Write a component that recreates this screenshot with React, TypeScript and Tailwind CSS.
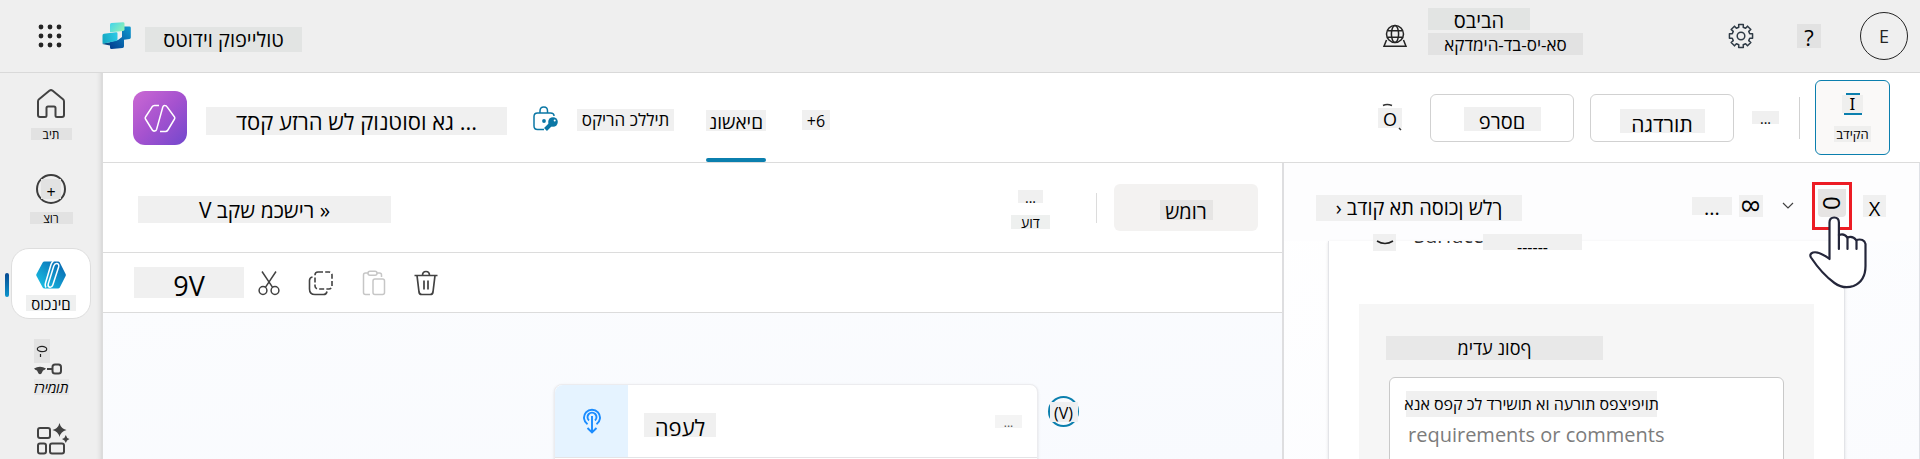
import React from "react";

type PatchProps = { text: string; className?: string };

function Patch({ text, className = "" }: PatchProps) {
  return (
    <span className={`flex shrink-0 items-end justify-center whitespace-nowrap text-black ${className}`}>
      <bdo dir="ltr" className="block">{text}</bdo>
    </span>
  );
}

function WaffleIcon() {
  return (
    <svg width="24" height="24" viewBox="0 0 24 24" fill="#242424" aria-hidden="true">
      {[3, 12, 21].map((y) => [3, 12, 21].map((x) => <circle key={`${x}-${y}`} cx={x} cy={y} r="2.4" />))}
    </svg>
  );
}

function ProductLogo() {
  return (
    <svg width="30" height="28" viewBox="0 0 30 28" aria-hidden="true">
      <defs>
        <linearGradient id="logoTop" x1="0" y1="0" x2="1" y2="0.6">
          <stop offset="0" stopColor="#3fd3ee" />
          <stop offset="1" stopColor="#8cf0b8" />
        </linearGradient>
        <linearGradient id="logoLeft" x1="0" y1="0.5" x2="1" y2="0.3">
          <stop offset="0" stopColor="#16a9c4" />
          <stop offset="1" stopColor="#2cc9e6" />
        </linearGradient>
        <linearGradient id="logoDark" x1="0" y1="1" x2="1" y2="0">
          <stop offset="0" stopColor="#023c8f" />
          <stop offset="1" stopColor="#0f9bd0" />
        </linearGradient>
      </defs>
      <path d="M20 4.500h7.500q1.300 0 1.300 1.300v9.700q0 1.300-1.300 1.500l-5.500.800v6.400q0 1.600-1.500 1.800l-11 1q-1.500 0-1.500-1.500v-5.500l8-2 4-3z" fill="url(#logoDark)" />
      <path d="M2 21.200q-1.500 0-1.700.800l7.700 1.600v-3.400z" fill="#0a4a86" />
      <path d="M2 11.800 14 10.200q1.500-.200 1.500 1.200v6q0 1.300-1.500 1.600L1.800 21.600Q.5 21.800.5 20.500v-7q0-1.500 1.500-1.700z" fill="url(#logoLeft)" />
      <path d="M9.500.9 21 .2q1.500 0 1.500 1.300v6q0 1.300-1.500 1.600L8 10.300V2.400Q8 1 9.500.9z" fill="url(#logoTop)" />
    </svg>
  );
}

function GlobeIcon() {
  return (
    <svg width="26" height="24" viewBox="0 0 26 24" fill="none" stroke="#242424" strokeWidth="1.500" aria-hidden="true">
      <circle cx="13" cy="10" r="8.500" />
      <ellipse cx="13" cy="10" rx="3.600" ry="8.500" />
      <path d="M5.500 6.800h15M5.500 13.200h15M4.500 16 2 22.200h22L21.500 16" />
    </svg>
  );
}

function GearIcon() {
  const teeth: string[] = [];
  for (let i = 0; i < 8; i++) {
    const a = (i * 45 * Math.PI) / 180;
    const p = (r: number, d: number) => `${(13 + r * Math.sin(a + d)).toFixed(2)} ${(13 - r * Math.cos(a + d)).toFixed(2)}`;
    teeth.push(`${p(9, -0.25)} L${p(11.8, -0.2)} L${p(11.8, 0.2)} L${p(9, 0.25)}`);
  }
  return (
    <svg width="26" height="26" viewBox="0 0 26 26" fill="none" stroke="#2f3b46" strokeWidth="1.500" strokeLinejoin="round" aria-hidden="true">
      <path d={`M${teeth.join(" L")} Z`} />
      <circle cx="13" cy="13" r="3.800" />
    </svg>
  );
}

function HomeIcon() {
  return (
    <svg width="30" height="30" viewBox="0 0 30 30" fill="none" stroke="#424242" strokeWidth="2" strokeLinejoin="round" aria-hidden="true">
      <path d="M2 12.500q0-1.400 1-2.200L13.600 1.600q1.400-1 2.800 0L27 10.300q1 .800 1 2.200V26q0 2-2 2h-5q-1.500 0-1.500-1.500V19q0-1.500-1.500-1.500h-6q-1.500 0-1.500 1.500v7.500Q10.500 28 9 28H4q-2 0-2-2z" />
    </svg>
  );
}

function AgentsIcon() {
  return (
    <svg width="30" height="28" viewBox="0 0 30 28" aria-hidden="true">
      <defs>
        <linearGradient id="agentHex" x1="0" y1="1" x2="1" y2="0">
          <stop offset="0" stopColor="#1cc8e8" />
          <stop offset="1" stopColor="#0560ad" />
        </linearGradient>
      </defs>
      <path d="M8.500.5H22q1.200 0 1.800 1l5.800 11.500q.5 1 0 2L23.800 26.500q-.6 1-1.800 1H8.500q-1.300 0-1.800-1L.5 15q-.5-1 0-2L6.700 1.500q.5-1 1.800-1z" fill="url(#agentHex)" />
      <path d="M17.500 0Q15.800 1 15 3.500L9.500 22q-.8 3 .5 4.500" fill="none" stroke="#fff" strokeWidth="1.500" />
      <path d="M17.800 5q1-2.800 3.200-2.500 2.300.500 1.700 3.200L16.800 24q-.9 2.600-3 2.300-2.200-.500-1.600-3.200z" fill="none" stroke="#fff" strokeWidth="1.500" />
    </svg>
  );
}

function AppsIcon() {
  return (
    <svg width="34" height="32" viewBox="0 0 34 32" fill="none" stroke="#424242" strokeWidth="2" aria-hidden="true">
      <rect x="2" y="5" width="12" height="10" rx="2" />
      <rect x="2" y="20.500" width="8" height="10" rx="2" />
      <rect x="14" y="20.500" width="14" height="10" rx="2" />
      <path d="M23.500 0q1.300 5.500 7 7-5.700 1.500-7 7-1.300-5.500-7-7 5.700-1.500 7-7zM29.800 12q.7 3.200 3.700 4-3 .800-3.700 4-.7-3.200-3.800-4 3.100-.800 3.800-4z" fill="#424242" stroke="none" />
    </svg>
  );
}

function FlowIcon() {
  return (
    <svg width="28" height="12" viewBox="0 0 28 12" fill="none" aria-hidden="true">
      <path d="M0 5.500Q6 2 12 5.500q-1 1.500-3 2l-1.500 3q-1.500 1.500-3 0L3 7.500q-2-.500-3-2z" fill="#424242" />
      <path d="M13 6h5" stroke="#424242" strokeWidth="2" />
      <rect x="18.500" y="1.500" width="8.500" height="9" rx="2.500" stroke="#424242" strokeWidth="2" />
    </svg>
  );
}

function AgentBadge() {
  return (
    <svg width="54" height="54" viewBox="0 0 54 54" fill="none" className="shrink-0" aria-hidden="true">
      <defs>
        <linearGradient id="badge" x1="0" y1="0" x2="1" y2="1">
          <stop offset="0" stopColor="#cb69d3" />
          <stop offset="0.500" stopColor="#a552cf" />
          <stop offset="1" stopColor="#7248cd" />
        </linearGradient>
      </defs>
      <rect width="54" height="54" rx="12" fill="url(#badge)" />
      <path d="M26 14.500h-4.500q-1.500 0-2.400 1.300L12.500 26q-.7 1 0 2l6.800 11q.8 1.300 2.300 1.100 1.500-.200 2-1.700L29.800 16q.6-1.600 2.200-1.400 1.300.100 2.100 1.300L41.500 26q.7 1 0 2l-6.600 11q-.9 1.500-2.400 1.500H27" stroke="#fff" strokeWidth="1.500" />
    </svg>
  );
}

function LockKeyIcon() {
  return (
    <svg width="26" height="26" viewBox="0 0 26 26" fill="none" stroke="#0b77a5" strokeWidth="1.500" aria-hidden="true">
      <path d="M11 23.500H4.500Q1 23.500 1 20v-9.500Q1 7 4.500 7h13Q21 7 21 10" />
      <path d="M7 7V5q0-4 3.800-4T14.500 5v2" />
      <circle cx="11" cy="15" r="1.900" fill="#0b77a5" stroke="none" />
      <circle cx="20" cy="16" r="4.800" fill="#0b77a5" stroke="none" />
      <path d="m17.500 18.500-5 5" strokeWidth="4" />
      <circle cx="21.700" cy="14.500" r="1" fill="#fff" stroke="none" />
    </svg>
  );
}

function ScissorsIcon() {
  return (
    <svg width="22" height="26" viewBox="0 0 22 26" fill="none" stroke="#424242" strokeWidth="1.500" aria-hidden="true">
      <circle cx="5" cy="20.500" r="3.900" />
      <circle cx="17" cy="20.500" r="3.900" />
      <path d="M4 1.500 14.600 17.300M18 1.500 7.400 17.300" />
    </svg>
  );
}

function CopyIcon() {
  return (
    <svg width="26" height="26" viewBox="0 0 26 26" fill="none" stroke="#424242" strokeWidth="1.600" aria-hidden="true">
      <rect x="7" y="2" width="17" height="17" rx="3" strokeDasharray="5 2.200" />
      <path d="M4.500 7Q1.500 7.500 1.500 10.500V19q0 5.500 5.500 5.500h8.500q3 0 3.500-3" />
    </svg>
  );
}

function PasteIcon() {
  return (
    <svg width="24" height="26" viewBox="0 0 24 26" fill="none" stroke="#c6c6c6" strokeWidth="1.500" aria-hidden="true">
      <path d="M8 24.500H3.500q-2 0-2-2V5q0-2 2-2H6M15 3h2.500q2 0 2 2v2" />
      <rect x="6" y="1.200" width="9" height="4" rx="2" />
      <rect x="11" y="9" width="11.500" height="15.500" rx="2" />
    </svg>
  );
}

function TrashIcon() {
  return (
    <svg width="24" height="26" viewBox="0 0 24 26" fill="none" stroke="#424242" strokeWidth="1.700" aria-hidden="true">
      <path d="M.5 5.500h23M8.500 5.500Q8.500 1.500 12 1.500t3.500 4M3 5.500l2 16.500q.4 2.500 2.800 2.500h8.400q2.400 0 2.800-2.500L21 5.500M10 10.500v9M14 10.500v9" />
    </svg>
  );
}

function TriggerIcon() {
  return (
    <svg width="18" height="26" viewBox="0 0 18 26" fill="none" stroke="#1a8cff" strokeWidth="1.900" aria-hidden="true">
      <path d="M4.500 16.300A8 8 0 1 1 13.500 16.300" />
      <path d="M6 12.500A4.500 4.500 0 1 1 12 12.500" />
      <path d="M9 8v16M4.500 20 9 24.500 13.500 20" />
    </svg>
  );
}

function HandPointer() {
  return (
    <svg width="59" height="74" viewBox="0 0 59 74" fill="#fff" stroke="#24263a" strokeWidth="2.200" strokeLinejoin="round" strokeLinecap="round" aria-hidden="true">
      <path d="M20.500 44V7.500q0-5 4.700-5t4.700 5V20q5.500-2 8.300 2.500Q44 20.500 47 25q8-2 9.500 4V51q0 15-12 20-10 3.500-19-3Q13 59 2 42.500 0 39 4 37.500q6-1.500 16.500 6.500z" />
      <path d="M29.900 20v14M38.500 22.500V34M47.500 25v9" fill="none" />
    </svg>
  );
}

function Sidebar() {
  return (
    <nav className="flex w-[103px] shrink-0 flex-col items-center border-r border-[#dcdcdc] bg-[#efefef] shadow-[inset_-6px_0_5px_-5px_#cfcfcf]">
      <a href="#home" className="mt-4 flex flex-col items-center gap-[9px]">
        <HomeIcon />
        <Patch text="בית" className="h-3 w-[41px] bg-[#e2e2e2] text-[12px] leading-[10px]" />
      </a>
      <a href="#create" className="mt-[34px] flex flex-col items-center gap-2">
        <span className="flex h-[30px] w-[30px] items-center justify-center rounded-full border-2 border-[#3d3d3d]">
          <Patch text="+" className="h-5 w-5 bg-[#e2e2e2] text-[16px] leading-[14px]" />
        </span>
        <Patch text="צור" className="h-3 w-[43px] bg-[#e2e2e2] text-[12px] leading-[10px]" />
      </a>
      <a href="#agents" aria-current="page" className="relative mt-6 flex h-[71px] w-[80px] flex-col items-center gap-[6px] rounded-[18px] border border-[#dedede] bg-white pt-3">
        <span className="absolute -left-[7px] top-6 h-6 w-1 rounded-sm bg-gradient-to-b from-[#084a92] to-[#0c94cc]" />
        <AgentsIcon />
        <Patch text="סוכנים" className="h-4 w-[50px] bg-[#eff0f0] text-[15px] leading-[14px]" />
      </a>
      <a href="#flows" className="mt-5 flex flex-col items-start">
        <span className="flex h-6 w-4 items-center justify-center bg-[#e2e2e2]">
          <svg width="12" height="12" viewBox="0 0 12 12" fill="none" stroke="#222" strokeWidth="1.200" aria-hidden="true">
            <ellipse cx="6" cy="4" rx="4.700" ry="2.600" />
            <path d="M4.500 9v3" />
          </svg>
        </span>
        <FlowIcon />
        <Patch text="זרימות" className="mt-1 h-4 w-[35px] bg-[#e7e7e7] text-[14px] italic leading-[14px]" />
      </a>
      <a href="#tools" aria-label="Tools" className="mt-7 pl-1">
        <AppsIcon />
      </a>
    </nav>
  );
}

function TopBar() {
  return (
    <header className="flex h-[73px] shrink-0 items-center border-b border-[#d9d9d9] bg-[#efefef] pl-[38px] pr-3">
      <button aria-label="Apps"><WaffleIcon /></button>
      <span className="ml-10"><ProductLogo /></span>
      <Patch text="סטודיו קופיילוט" className="ml-[13px] mt-[6px] h-[25px] w-[157px] bg-[#e2e4e3] text-[20px] leading-6" />
      <div className="ml-auto flex items-center">
        <GlobeIcon />
        <div className="ml-5 mt-[-9px] flex flex-col gap-[3px]">
          <Patch text="סביבה" className="h-[22px] w-[102px] bg-[#e2e4e3] text-[20px] leading-[18px]" />
          <Patch text="אקדמיה-דב-סי-אס" className="h-[22px] w-[155px] bg-[#e2e2e2] text-[17px] leading-5" />
        </div>
        <button aria-label="Settings" className="ml-[145px]"><GearIcon /></button>
        <button aria-label="Help" className="ml-[43px]">
          <Patch text="?" className="h-6 w-6 bg-[#e2e2e2] text-[22px] leading-[22px]" />
        </button>
        <button className="ml-[39px] flex h-12 w-12 items-center justify-center rounded-full border border-[#242424] text-[18px] text-[#242424]">E</button>
      </div>
    </header>
  );
}

function AgentBar() {
  return (
    <div className="flex h-[90px] shrink-0 items-center border-b border-[#dcdcdc] bg-white pl-[30px] pr-[30px]">
      <AgentBadge />
      <Patch text="דסק עזרה של קונטוסו אג ..." className="ml-[19px] mt-[6px] h-7 w-[301px] bg-[#f0f0f0] text-[22px] leading-7" />
      <span className="ml-[26px] mt-[3px] shrink-0"><LockKeyIcon /></span>
      <div className="flex self-stretch pl-[18px]">
        <a href="#overview" className="flex items-center pt-[5px]"><Patch text="סקירה כללית" className="h-[22px] w-[97px] bg-[#f0f0f0] text-[17px] leading-[22px]" /></a>
        <a href="#topics" aria-current="page" className="relative ml-8 flex items-center pt-[5px]">
          <Patch text="נושאים" className="h-[21px] w-[60px] bg-[#f0f0f0] text-[19px] leading-[18px]" />
          <span className="absolute bottom-0 left-0 h-1 w-full rounded-sm bg-[#0b7fae]" />
        </a>
        <button className="ml-9 flex items-center pt-[5px]"><Patch text="+6" className="h-5 w-7 bg-[#f0f0f0] text-[16px] leading-[18px]" /></button>
      </div>
      <div className="ml-auto flex items-center">
        <button aria-label="Search" className="relative">
          <Patch text="O" className="h-5 w-6 bg-[#f0f0f0] text-[18px] leading-[18px]" />
          <svg className="absolute -left-1 -top-1 overflow-visible" width="32" height="28" viewBox="0 0 32 28" fill="none" stroke="#333" strokeWidth="1.500" aria-hidden="true">
            <path d="M9 1.500q4-2 9 0M25 24l2 2" />
          </svg>
        </button>
        <button className="ml-7 flex h-12 w-36 items-center justify-center rounded-md border border-[#d1d1d1] bg-white">
          <Patch text="פרסם" className="mt-0.5 h-6 w-[77px] bg-[#f0f0f0] text-[20px] leading-[18px]" />
        </button>
        <button className="ml-4 flex h-12 w-36 items-center justify-center rounded-md border border-[#d1d1d1] bg-white">
          <Patch text="הגדרות" className="mt-[6px] h-6 w-[85px] bg-[#f0f0f0] text-[21px] leading-[18px]" />
        </button>
        <button aria-label="More" className="ml-[18px]"><Patch text="..." className="h-[13px] w-[27px] bg-[#f0f0f0] text-[14px] leading-[10px]" /></button>
        <span className="ml-5 h-[42px] w-px bg-[#d1d1d1]" />
        <button className="ml-[15px] flex h-[75px] w-[75px] flex-col items-center rounded-md border border-[#0b7fae] bg-[#faf9f8] pt-3">
          <span className="h-0.5 w-[14px] bg-[#0b7fae]" />
          <Patch text="I" className="h-[18px] w-[21px] bg-[#efefee] font-['Noto_Sans'] text-[17px] leading-[18px]" />
          <span className="h-0.5 w-[18px] bg-[#0b7fae]" />
          <Patch text="בדיקה" className="mt-[11px] h-4 w-[37px] bg-[#efefee] text-[13px] leading-4" />
        </button>
      </div>
    </div>
  );
}

function Canvas() {
  return (
    <section className="flex min-w-0 flex-1 flex-col border-r-2 border-[#dedee0]">
      <div className="flex h-[90px] shrink-0 items-center border-b border-[#dcdcdc] bg-white pl-[35px] pr-6">
        <Patch text="V בקש מכשיר »" className="mt-1 h-[27px] w-[253px] bg-[#f0f0f0] text-[21px] leading-[25px]" />
        <div className="ml-auto flex items-center">
          <button className="mt-1 flex flex-col items-center gap-3">
            <Patch text="..." className="h-[13px] w-[25px] bg-[#f0f0f0] text-[14px] leading-[10px]" />
            <Patch text="עוד" className="h-[14px] w-[39px] bg-[#eef0ef] text-[14px] leading-[12px]" />
          </button>
          <span className="ml-[46px] h-[30px] w-px bg-[#dcdcdc]" />
          <button className="ml-[17px] flex h-[47px] w-36 items-center justify-center rounded-md bg-[#f3f2f1]">
            <Patch text="שמור" className="mt-1 h-5 w-[53px] bg-[#e6e5e4] text-[20px] leading-4" />
          </button>
        </div>
      </div>
      <div className="flex h-[60px] shrink-0 items-center border-b border-[#dcdcdc] bg-white pl-[31px]">
        <Patch text="9V" className="h-[31px] w-[110px] bg-[#f0f0f0] text-[27px] leading-6" />
        <button aria-label="Cut" className="ml-[14px]"><ScissorsIcon /></button>
        <button aria-label="Copy" className="ml-7"><CopyIcon /></button>
        <button aria-label="Paste" disabled className="ml-7"><PasteIcon /></button>
        <button aria-label="Delete" className="ml-7"><TrashIcon /></button>
      </div>
      <div className="flex min-h-0 flex-1 items-start justify-center bg-gradient-to-br from-[#fbfcfe] to-[#f8fafe] pl-[248px] pt-[71px]">
        <article className="flex w-[484px] shrink-0 flex-col rounded-t-lg border border-[#ececef] bg-white shadow">
          <div className="flex h-[73px] items-center border-b border-[#e4e4e6]">
            <span className="flex w-[73px] items-center justify-center self-stretch rounded-tl-lg bg-[#e5f3ff]"><TriggerIcon /></span>
            <Patch text="הפעל" className="ml-4 mt-2 h-6 w-[72px] bg-[#f0f0f0] text-[22px] leading-5" />
            <button aria-label="Node options" className="ml-auto mr-[15px]">
              <Patch text="..." className="h-[13px] w-[27px] bg-[#f0f0f0] text-[12px] leading-[10px] opacity-70" />
            </button>
          </div>
          <div className="h-12" />
        </article>
        <button className="ml-2.5 mt-3 flex h-[31px] w-[31px] shrink-0 items-center justify-center rounded-full border-2 border-[#0b7fae]">
          <Patch text="(V)" className="h-5 w-[28px] bg-[#eeeff1] text-[16px] leading-[18px]" />
        </button>
      </div>
    </section>
  );
}

function TestPanel() {
  return (
    <aside className="flex w-[636px] shrink-0 flex-col border-r border-[#dfe1e6] bg-gradient-to-br from-white to-[#fafbfe]">
      <div className="flex h-[78px] shrink-0 items-center bg-[#fdfdfe] pl-8 pr-[33px]">
        <Patch text="› בדוק את הסוכן שלך" className="mt-3 h-[26px] w-[206px] bg-[#f0f0f0] text-[20px] leading-[26px]" />
        <div className="ml-auto mt-[7px] flex items-center">
          <button aria-label="More options"><Patch text="..." className="h-[18px] w-10 bg-[#f0f0f0] text-[20px] leading-[14px]" /></button>
          <button aria-label="Connections" className="ml-[7px]">
            <span className="flex h-[22px] w-6 items-center justify-center bg-[#f0f0f0] text-[24px] leading-none text-black">
              <span className="rotate-90">8</span>
            </span>
          </button>
          <button aria-label="Expand" className="ml-[19px]">
            <svg width="12" height="8" viewBox="0 0 12 8" fill="none" stroke="#424242" strokeWidth="1.200" aria-hidden="true"><path d="m1 1 5 5 5-5" /></svg>
          </button>
          <button aria-label="Reset conversation" className="relative ml-[18px] flex h-12 w-10 items-start justify-center border-[3px] border-[#ec1c24] pt-1">
            <span className="flex h-7 w-7 items-center justify-center rounded-b bg-[#e6e4e3] text-[24px] leading-none text-black">
              <span className="rotate-90">0</span>
            </span>
            <span className="pointer-events-none absolute -left-[6px] top-[30px] z-10"><HandPointer /></span>
          </button>
          <button aria-label="Close" className="ml-[11px]"><Patch text="X" className="h-[22px] w-[23px] bg-[#f0f0f0] text-[20px] leading-4" /></button>
        </div>
      </div>
      <div className="ml-11 mr-[74px] flex min-h-0 flex-1 flex-col border-x border-[#e3e4e8] bg-white px-[30px] shadow-sm">
        <div className="flex h-[63px] shrink-0 items-start pl-[14px]">
          <span className="-mt-[7px] flex h-[17px] w-[23px] items-center justify-center bg-[#f0f0f0]">
            <svg width="18" height="8" viewBox="0 0 18 8" fill="none" stroke="#222" strokeWidth="1.500" aria-hidden="true"><path d="M1 2q8 5 16 0" /></svg>
          </span>
          <span className="ml-[18px] flex h-[3px] w-[69px] items-end overflow-hidden text-[20px] leading-4 text-[#333]">Surface</span>
          <Patch text="------" className="-mt-[7px] h-4 w-[99px] bg-[#f0f0f0] text-[16px] leading-[6px]" />
        </div>
        <div className="flex min-h-0 flex-1 flex-col bg-[#f6f6f6] pl-[27px] pr-[30px] pt-8">
          <Patch text="מידע נוסף" className="h-6 w-[217px] bg-[#e8e8e8] text-[18px] leading-6" />
          <div className="ml-[3px] mt-[17px] flex h-28 shrink-0 flex-col rounded-md border border-[#c9c9c9] bg-white pl-4 pt-[13px]">
            <label htmlFor="details" className="flex">
              <Patch text="אנא ספק כל דרישות או הערות ספציפיות" className="h-[26px] w-[251px] bg-[#f0f0f0] text-[16px] leading-[26px]" />
            </label>
            <textarea id="details" rows={1} placeholder="requirements or comments" className="block w-full resize-none overflow-hidden bg-transparent pl-0.5 font-['Open_Sans','Noto_Sans',sans-serif] text-[20px] leading-9 outline-none placeholder:text-[#7c7c7c]" />
          </div>
        </div>
      </div>
    </aside>
  );
}

export default function App() {
  return (
    <div className="flex h-screen flex-col overflow-hidden bg-white font-['Open_Sans','Noto_Sans',sans-serif]">
      <TopBar />
      <div className="flex min-h-0 flex-1">
        <Sidebar />
        <main className="flex min-w-0 flex-1 flex-col">
          <AgentBar />
          <div className="flex min-h-0 flex-1">
            <Canvas />
            <TestPanel />
          </div>
        </main>
      </div>
    </div>
  );
}
